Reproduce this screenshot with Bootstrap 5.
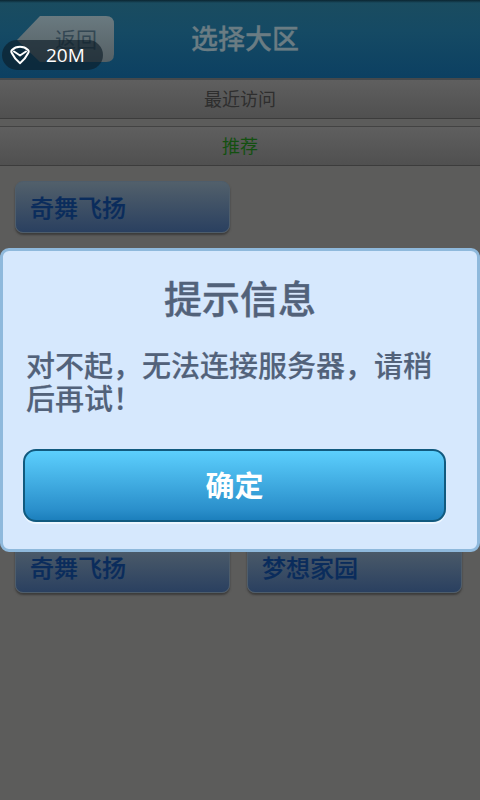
<!DOCTYPE html>
<html lang="zh">
<head>
<meta charset="utf-8">
<title>选择大区</title>
<link href="https://cdn.jsdelivr.net/npm/bootstrap@5.3.0/dist/css/bootstrap.min.css" rel="stylesheet">
<style>
html,body{height:100%;overflow:hidden}
body{background:#5c5c5b;font-family:"Noto Sans CJK SC","Liberation Sans",sans-serif;width:480px;height:800px}
.screen{width:480px;height:800px;position:relative;overflow:hidden}
.topbar{height:78px;background:linear-gradient(#0b2531 0,#1a4c60 3px,#154a64 40%,#0c4062 100%);position:relative}
.topline{height:2px;background:#45494c}
.backshape{position:absolute;left:16px;top:16px}
.backlabel{position:absolute;left:55px;top:25px;color:#334753;font-size:21px;line-height:26px}
.ptitle{font-size:27px;line-height:76px;color:#6a7c83;padding-left:191px;font-weight:500;-webkit-text-stroke:.3px #6a7c83}
.meter{position:absolute;left:2px;top:40px;width:101px;height:30px;border-radius:15px;background:rgba(12,28,38,.62);color:#fff;font-family:"Open Sans","Liberation Sans",sans-serif;font-size:19px;line-height:30px;padding-left:44px}
.meter svg{position:absolute;left:8px;top:5px}
.band{height:39px;background:linear-gradient(#5f5f5f,#505050);border-bottom:1px solid #3c3c3c;text-align:center;font-size:18px;line-height:36px;color:#2e2e2e}
.band-two{margin-top:7px;border-top:1px solid #434343;height:40px;color:#135010}
.tile{width:215px;height:52px;border:1px solid #4e5d6b;border-radius:8px;background:linear-gradient(#52606b,#2a4060);box-shadow:0 2px 2px #3c3c3c;color:#0a2c5c;font-size:24px;font-weight:500;line-height:50px;padding-left:14px;-webkit-text-stroke:.2px #0a2c5c}
.tilerow{padding-left:15px;gap:17px}
.first{margin-top:15px}
.second{margin-top:308px}
.veil{position:absolute;left:0;top:248px;width:480px;height:304px;background:#d6e8fd;border:3px solid #8fb9dc;border-radius:9px}
.vhead{font-size:38px;font-weight:500;line-height:50px;color:#52627a;margin-top:21px;text-align:center;-webkit-text-stroke:.4px #52627a}
.vtext{font-size:29px;font-weight:500;line-height:33px;color:#52627a;margin:26px 0 0 23px;width:410px;-webkit-text-stroke:.15px #52627a}
.vbtn{display:block;margin:35px 0 0 20px;width:423px;height:73px;border:2px solid #115a7f;border-radius:13px;background:linear-gradient(#5ccffd,#2a8fcb 85%,#1c7fbc);color:#fff;font-size:29px;font-weight:700;line-height:40px;text-align:center;box-shadow:0 2px 0 #ecf6ff;padding:0 0 4px}
</style>
</head>
<body>
<div class="screen">
  <div class="topbar">
    <div class="ptitle">选择大区</div>
    <svg class="backshape" width="98" height="46" viewBox="0 0 98 46"><defs><linearGradient id="bk" x1="0" y1="0" x2="0" y2="1"><stop offset="0" stop-color="#6a7a80"/><stop offset="1" stop-color="#556065"/></linearGradient></defs><path d="M24 0 H90 Q98 0 98 8 V38 Q98 46 90 46 H24 L1 24 Z" fill="url(#bk)"/></svg>
    <div class="backlabel">返回</div>
    <div class="meter">
      <svg width="20" height="20" viewBox="0 0 20 20" fill="none" stroke="#fff" stroke-width="2" stroke-linejoin="round" stroke-linecap="round"><path d="M10 1.800 C13 1.800 16 3 18 5 C18.800 5.800 18.800 7 18.200 8 C16.500 11.500 13.500 15.500 10 18.200 C6.500 15.500 3.500 11.500 1.800 8 C1.200 7 1.200 5.800 2 5 C4 3 7 1.800 10 1.800 Z"/><path d="M4 6.500 L10 10.500 L16 6.500"/></svg>20M
    </div>
  </div>
  <div class="topline"></div>
  <div class="band">最近访问</div>
  <div class="band band-two">推荐</div>
  <div class="d-flex tilerow first"><div class="tile">奇舞飞扬</div></div>
  <div class="d-flex tilerow second"><div class="tile">奇舞飞扬</div><div class="tile">梦想家园</div></div>
  <div class="veil">
    <div class="vhead">提示信息</div>
    <div class="vtext">对不起，无法连接服务器，请稍后再试！</div>
    <button class="btn vbtn" type="button">确定</button>
  </div>
</div>
<script src="https://cdn.jsdelivr.net/npm/bootstrap@5.3.0/dist/js/bootstrap.bundle.min.js"></script>
</body>
</html>
